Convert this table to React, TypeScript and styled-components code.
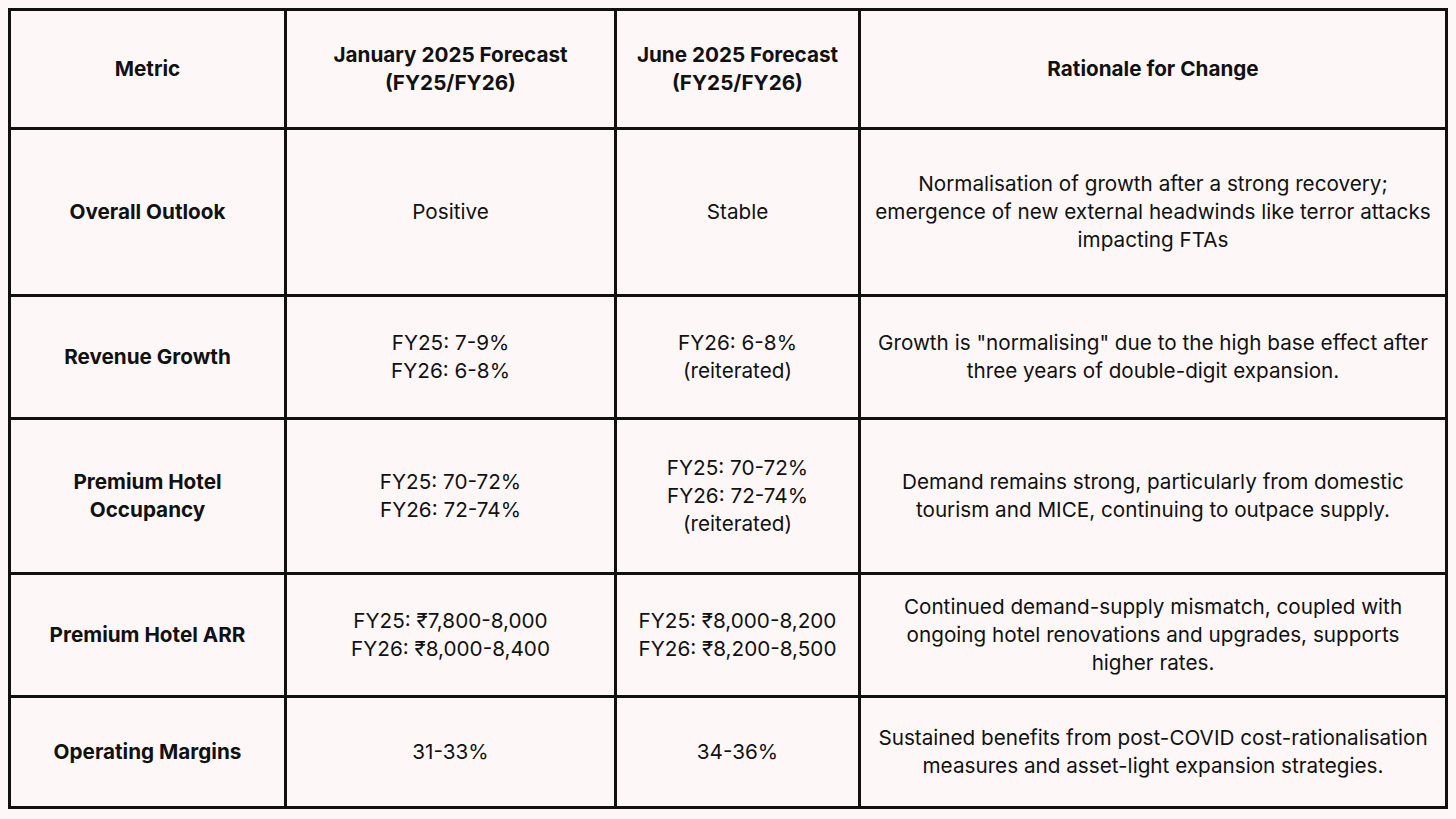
import styled, {createGlobalStyle} from "styled-components";

const GlobalStyle = createGlobalStyle`
  body {
    margin: 8px;
    background: #fdf8f7;
    font-family: Inter, "Liberation Sans", sans-serif;
    color: #111;
  }
`

const Table = styled.div`
  display: grid;
  grid-template-columns: 273px 327px 241px 584px;
  grid-template-rows: 116px 164px 120px 152px 120px 108px;
  gap: 3px;
  padding: 3px;
  width: 1440px;
  box-sizing: border-box;
  background: #111;
`

const Cell = styled.div<{ $head?: boolean }>`
  background: #fdf8f7;
  display: flex;
  align-items: center;
  justify-content: center;
  text-align: center;
  font-size: 20.7px;
  line-height: 28px;
  font-weight: ${props => props.$head ? 700 : 400};
  padding: 0 8px;
`

const rows = [
    ["Overall Outlook", "Positive", "Stable", "Normalisation of growth after a strong recovery;\nemergence of new external headwinds like terror attacks\nimpacting FTAs"],
    ["Revenue Growth", "FY25: 7-9%\nFY26: 6-8%", "FY26: 6-8%\n(reiterated)", "Growth is \"normalising\" due to the high base effect after\nthree years of double-digit expansion."],
    ["Premium Hotel\nOccupancy", "FY25: 70-72%\nFY26: 72-74%", "FY25: 70-72%\nFY26: 72-74%\n(reiterated)", "Demand remains strong, particularly from domestic\ntourism and MICE, continuing to outpace supply."],
    ["Premium Hotel ARR", "FY25: ₹7,800-8,000\nFY26: ₹8,000-8,400", "FY25: ₹8,000-8,200\nFY26: ₹8,200-8,500", "Continued demand-supply mismatch, coupled with\nongoing hotel renovations and upgrades, supports\nhigher rates."],
    ["Operating Margins", "31-33%", "34-36%", "Sustained benefits from post-COVID cost-rationalisation\nmeasures and asset-light expansion strategies."],
]

const Lines = ({text}: { text: string }) => (
    <div>
        {text.split("\n").map((line, i) => <div key={i}>{line}</div>)}
    </div>
)

const App = () => {
    return (
        <>
            <GlobalStyle/>
            <Table>
                <Cell $head>Metric</Cell>
                <Cell $head><Lines text={"January 2025 Forecast\n(FY25/FY26)"}/></Cell>
                <Cell $head><Lines text={"June 2025 Forecast\n(FY25/FY26)"}/></Cell>
                <Cell $head>Rationale for Change</Cell>
                {rows.map((row, r) => row.map((text, c) => (
                    <Cell key={r + "-" + c} $head={c === 0}><Lines text={text}/></Cell>
                )))}
            </Table>
        </>
    )
}

export default App;
